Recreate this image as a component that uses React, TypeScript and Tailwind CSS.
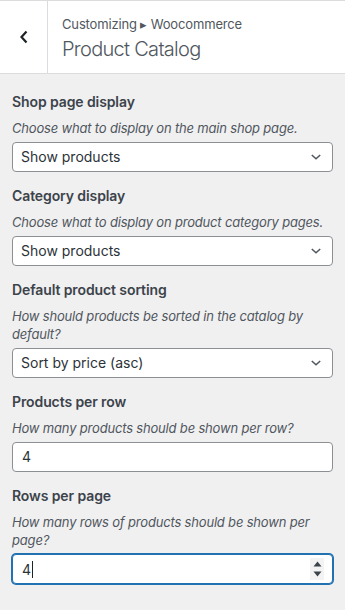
import React from "react";

const font = { fontFamily: 'Inter, "Noto Sans", "Liberation Sans", sans-serif' };

function Chevron() {
  return (
    <svg width="12" height="8" viewBox="0 0 12 8" className="absolute right-[10px] top-1/2 -translate-y-1/2">
      <path d="M1.8 2 L6 5.8 L10.2 2" fill="none" stroke="#50575e" strokeWidth="1.5" />
    </svg>
  );
}

function Label({ children }: { children: React.ReactNode }) {
  return (
    <div className="text-[14px] leading-[24px] font-semibold tracking-[-0.1px] text-[#3c434a]">{children}</div>
  );
}

function Desc({ children }: { children: React.ReactNode }) {
  return (
    <div className="mt-[5px] text-[13px] leading-[18px] italic tracking-[-0.18px] text-[#50575e]">{children}</div>
  );
}

function SelectBox({ value }: { value: string }) {
  return (
    <div className="relative mt-[5px] h-[30px] rounded-[4px] border border-[#8c8f94] bg-white pl-[8px] text-[14px] leading-[28px] text-[#2c3338]">
      {value}
      <Chevron />
    </div>
  );
}

function Control({ label, desc, children }: { label: string; desc: string; children: React.ReactNode }) {
  return (
    <div className="mb-[12px]">
      <Label>{label}</Label>
      <Desc>{desc}</Desc>
      {children}
    </div>
  );
}

export default function App() {
  return (
    <div style={font} className="w-[345px] h-[610px] bg-[#f0f0f1] overflow-hidden">
      <div className="flex h-[74px] border-y border-[#dcdcde] bg-white">
        <div className="flex w-[48px] shrink-0 items-center justify-center border-r border-[#dcdcde]">
          <svg width="12" height="16" viewBox="0 0 12 16">
            <path d="M8.5 2.5 L3.5 8 L8.5 13.5" fill="none" stroke="#1d2327" strokeWidth="2.2" />
          </svg>
        </div>
        <div className="flex flex-col pl-[14px] pt-[14px]">
          <div className="text-[13px] leading-[18px] tracking-[-0.15px] text-[#50575e]">Customizing ▸ Woocommerce</div>
          <div className="mt-[3px] text-[20px] leading-[26px] font-light tracking-[-0.7px] text-[#50575e]">Product Catalog</div>
        </div>
      </div>
      <div className="px-[12px] pt-[16px]">
        <Control label="Shop page display" desc="Choose what to display on the main shop page.">
          <SelectBox value="Show products" />
        </Control>
        <Control label="Category display" desc="Choose what to display on product category pages.">
          <SelectBox value="Show products" />
        </Control>
        <Control label="Default product sorting" desc="How should products be sorted in the catalog by default?">
          <SelectBox value="Sort by price (asc)" />
        </Control>
        <Control label="Products per row" desc="How many products should be shown per row?">
          <div className="mt-[5px] h-[30px] rounded-[4px] border border-[#8c8f94] bg-white pl-[9px] text-[14px] leading-[28px] text-[#2c3338]">
            4
          </div>
        </Control>
        <Control label="Rows per page" desc="How many rows of products should be shown per page?">
          <div className="relative mt-[5px] flex h-[30px] items-center rounded-[4px] border border-[#2271b1] bg-white pl-[9px] text-[14px] text-[#2c3338] shadow-[0_0_0_1px_#2271b1]">
            <span>4</span>
            <span className="ml-[1px] inline-block h-[17px] w-[1px] bg-[#1d2327]" />
            <div className="absolute right-[8px] top-[3px] flex h-[22px] w-[14px] flex-col items-center justify-between bg-[#f3f3f3] py-[3px]">
              <svg width="9" height="6" viewBox="0 0 9 6"><path d="M0.5 5.5 L4.5 0.5 L8.5 5.5 Z" fill="#3c434a" /></svg>
              <svg width="9" height="6" viewBox="0 0 9 6"><path d="M0.5 0.5 L4.5 5.5 L8.5 0.5 Z" fill="#3c434a" /></svg>
            </div>
          </div>
        </Control>
      </div>
    </div>
  );
}
